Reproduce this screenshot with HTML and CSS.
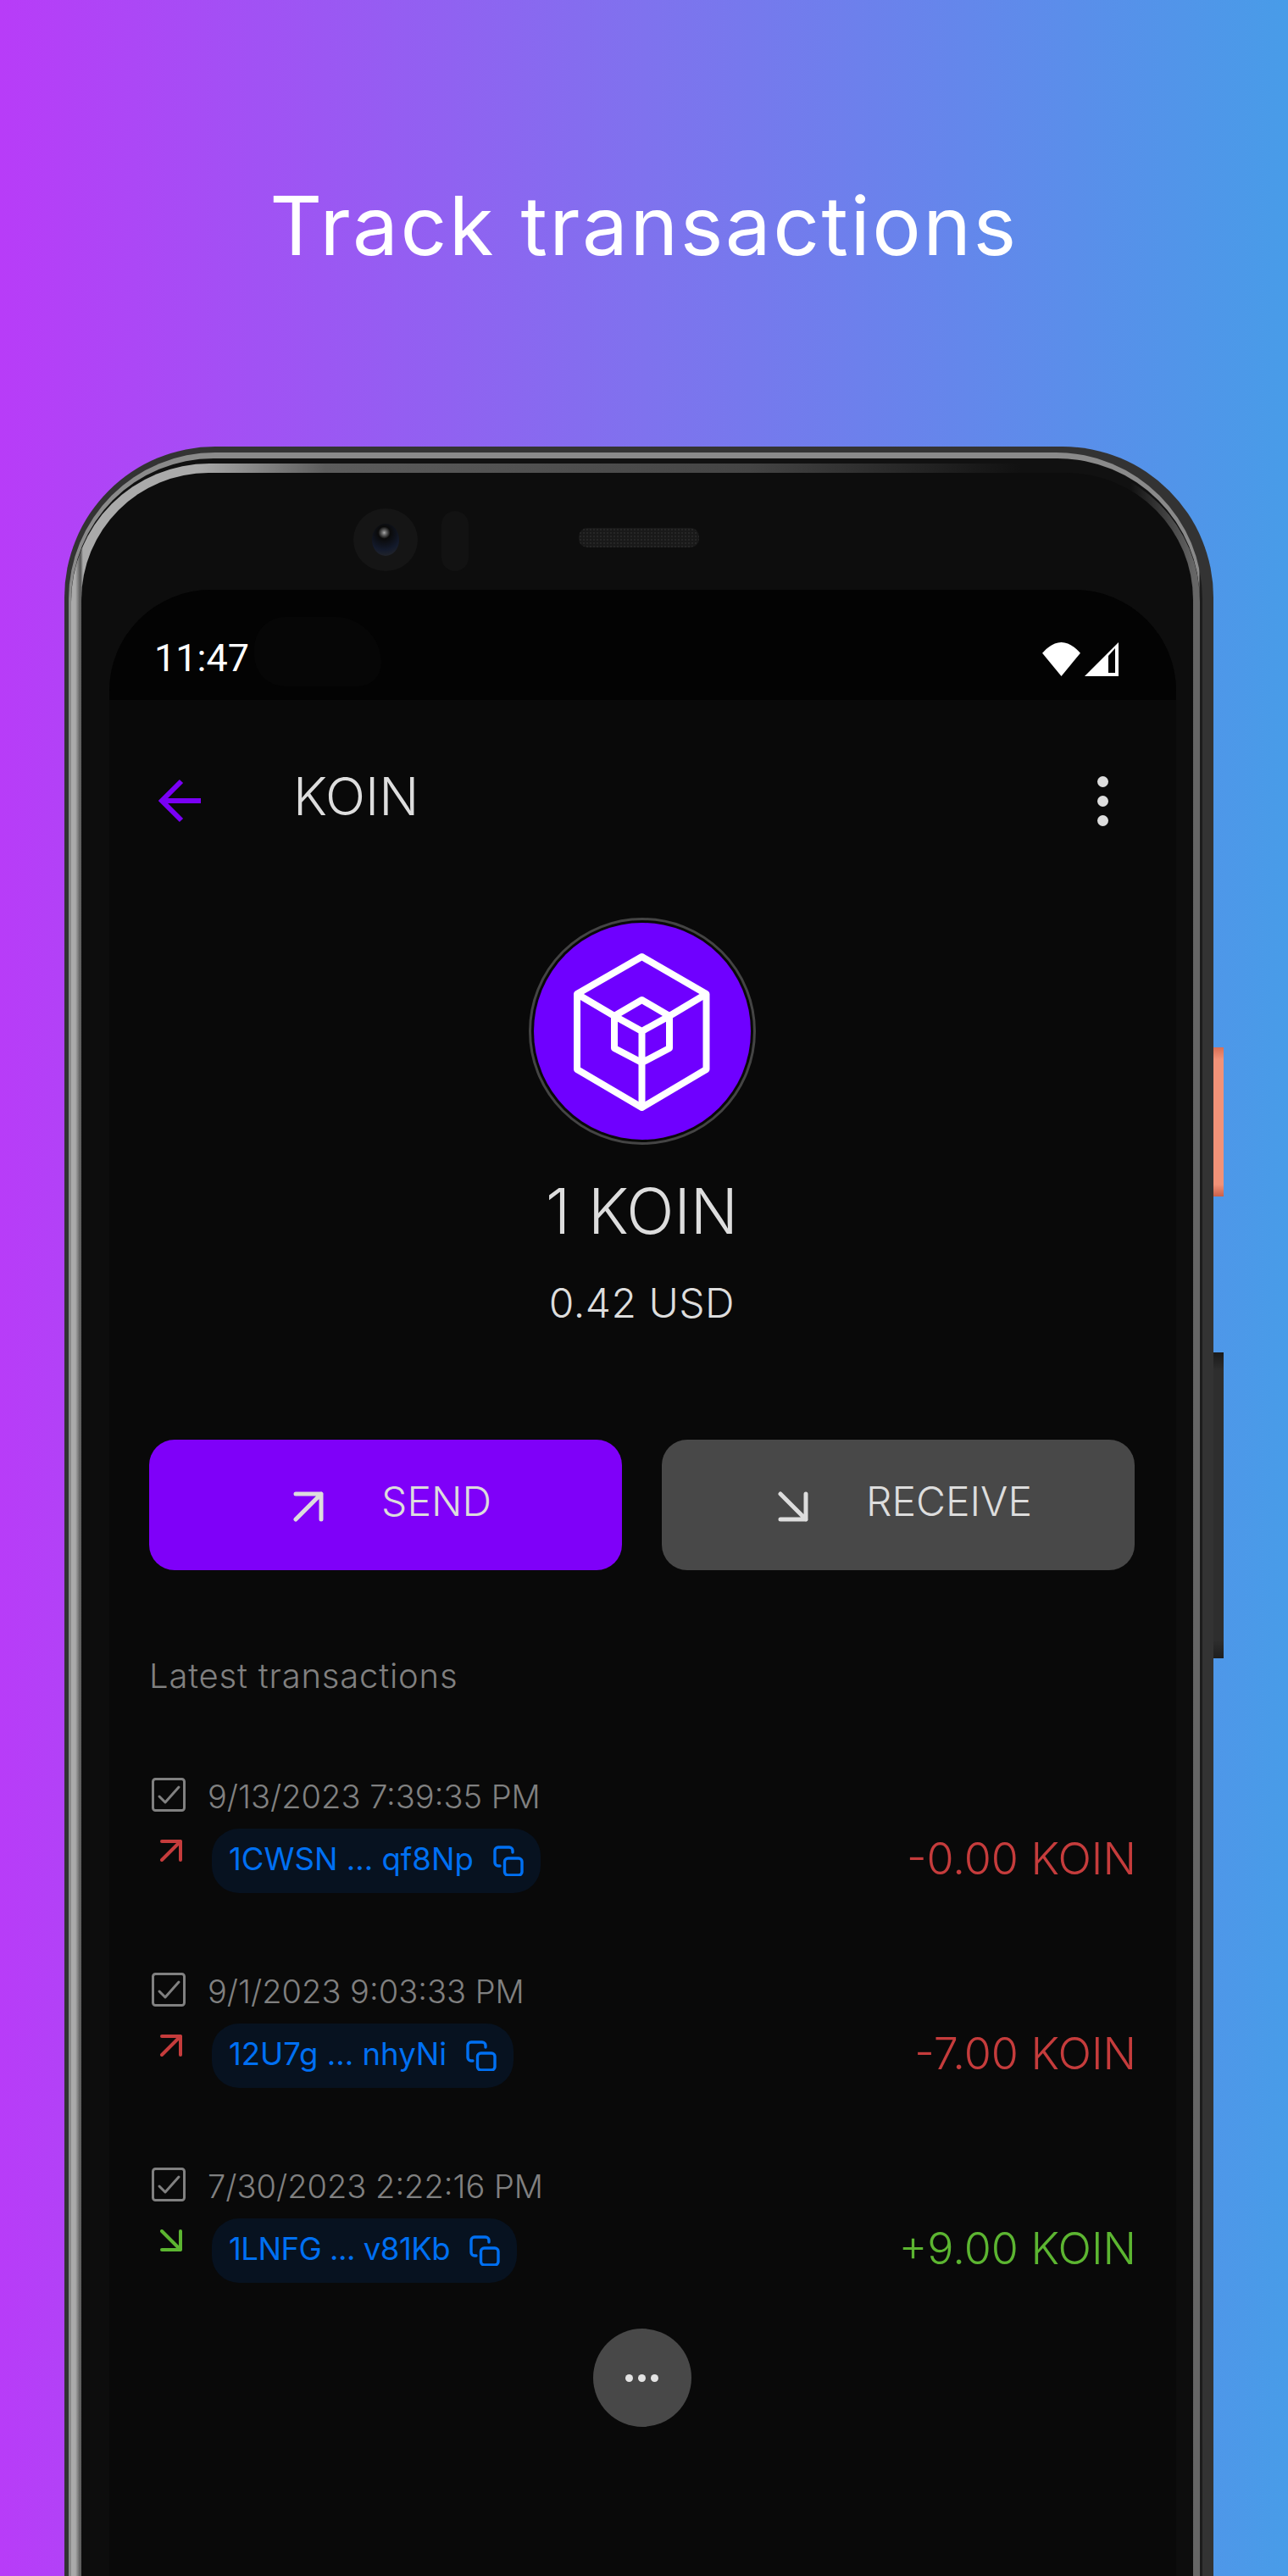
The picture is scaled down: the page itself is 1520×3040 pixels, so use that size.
FILE: index.html
```html
<!DOCTYPE html>
<html>
<head>
    <title>Track transactions</title>
    <link rel="stylesheet" href="styles.css">
</head>
<body>
    <h1 class="headline">Track transactions</h1>

    <div class="phone">
        <div class="side-key side-key-power"></div>
        <div class="side-key side-key-volume"></div>

        <div class="rim-outer">
            <div class="rim-gap">
                <div class="rim-inner">
                    <div class="bezel">
                        <!-- Camera and speaker -->
                        <div class="sensors">
                            <div class="camera">
                                <div class="lens"></div>
                            </div>
                            <div class="ir-sensor"></div>
                            <div class="speaker"></div>
                        </div>

                        <div class="screen">
                            <div class="status-bar">
                                <span class="clock">11:47</span>
                                <div class="punch-hole"></div>
                                <div class="status-icons">
                                    <svg class="wifi-icon" viewBox="0 0 48 41">
                                        <path d="M24 41 L1 13 Q24 -13 47 13 Z" fill="#fff"/>
                                    </svg>
                                    <svg class="signal-icon" viewBox="0 0 40 40">
                                        <path d="M40 0 V40 H0 Z" fill="#fff"/>
                                        <path d="M28 16 L36 7 V36 H28 Z" fill="#030303"/>
                                    </svg>
                                </div>
                            </div>

                            <div class="app-bar">
                                <svg class="back-icon" viewBox="0 0 50 52">
                                    <path d="M27 3 L4 26 L27 49 M4 26 H50" fill="none" stroke="#7a00f5" stroke-width="6"/>
                                </svg>
                                <span class="app-title">KOIN</span>
                                <div class="menu-dots">
                                    <i></i><i></i><i></i>
                                </div>
                            </div>

                            <div class="coin">
                                <div class="coin-logo">
                                    <svg viewBox="0 0 256 256">
                                        <g fill="none" stroke="#fff" stroke-width="8" stroke-linejoin="round">
                                            <path d="M127.5 40 L203.5 84 V173 L127.5 218 L51 173 V84 Z"/>
                                            <path d="M51 84 L95 110 M203.5 84 L160 110"/>
                                            <path d="M127.5 91 L160 110 V148 L127.5 165 L95 148 V110 Z"/>
                                            <path d="M95 110 L127.5 128 L160 110 M127.5 128 V218"/>
                                        </g>
                                    </svg>
                                </div>
                                <div class="coin-amount">1 KOIN</div>
                                <div class="coin-value">0.42 USD</div>
                            </div>

                            <div class="actions">
                                <button class="action action-send">
                                    <svg class="action-icon" viewBox="0 0 36 36">
                                        <path d="M3 3 H33 V33 M33 3 L3 33" fill="none" stroke="#ddd" stroke-width="5" stroke-linecap="round" stroke-linejoin="round"/>
                                    </svg>
                                    SEND
                                </button>
                                <button class="action action-receive">
                                    <svg class="action-icon" viewBox="0 0 36 36">
                                        <path d="M3 33 H33 V3 M33 33 L3 3" fill="none" stroke="#ddd" stroke-width="5" stroke-linecap="round" stroke-linejoin="round"/>
                                    </svg>
                                    RECEIVE
                                </button>
                            </div>

                            <div class="list-label">Latest transactions</div>

                            <!-- Transactions -->
                            <div class="tx-list">
                                <div class="tx">
                                    <div class="tx-main">
                                        <div class="tx-date">
                                            <svg class="check-icon" viewBox="0 0 40 40">
                                                <rect x="1.5" y="1.5" width="37" height="37" rx="3" fill="none" stroke="#808080" stroke-width="3"/>
                                                <path d="M9 22 L16 29 L32 11" fill="none" stroke="#808080" stroke-width="3" stroke-linecap="round" stroke-linejoin="round"/>
                                            </svg>
                                            <span>9/13/2023 7:39:35 PM</span>
                                        </div>
                                        <div class="tx-addr">
                                            <svg class="tx-arrow" viewBox="0 0 26 26">
                                                <path d="M2 2 H24 V24 M24 2 L2 24" fill="none" stroke="#c53c3c" stroke-width="4" stroke-linecap="round" stroke-linejoin="round"/>
                                            </svg>
                                            <div class="addr-pill">
                                                1CWSN ... qf8Np
                                                <svg class="copy-icon" viewBox="0 0 36 36">
                                                    <rect x="13.5" y="15" width="20.5" height="20" rx="4" fill="none" stroke="#0070f3" stroke-width="3.4"/>
                                                    <path d="M8 24 H6 a4 4 0 0 1 -4 -4 V6 a4 4 0 0 1 4 -4 h13 a4 4 0 0 1 4 4 v2" fill="none" stroke="#0070f3" stroke-width="3.4" stroke-linecap="round"/>
                                                </svg>
                                            </div>
                                        </div>
                                    </div>
                                    <div class="tx-amount tx-out">-0.00 KOIN</div>
                                </div>

                                <div class="tx">
                                    <div class="tx-main">
                                        <div class="tx-date">
                                            <svg class="check-icon" viewBox="0 0 40 40">
                                                <rect x="1.5" y="1.5" width="37" height="37" rx="3" fill="none" stroke="#808080" stroke-width="3"/>
                                                <path d="M9 22 L16 29 L32 11" fill="none" stroke="#808080" stroke-width="3" stroke-linecap="round" stroke-linejoin="round"/>
                                            </svg>
                                            <span>9/1/2023 9:03:33 PM</span>
                                        </div>
                                        <div class="tx-addr">
                                            <svg class="tx-arrow" viewBox="0 0 26 26">
                                                <path d="M2 2 H24 V24 M24 2 L2 24" fill="none" stroke="#c53c3c" stroke-width="4" stroke-linecap="round" stroke-linejoin="round"/>
                                            </svg>
                                            <div class="addr-pill">
                                                12U7g ... nhyNi
                                                <svg class="copy-icon" viewBox="0 0 36 36">
                                                    <rect x="13.5" y="15" width="20.5" height="20" rx="4" fill="none" stroke="#0070f3" stroke-width="3.4"/>
                                                    <path d="M8 24 H6 a4 4 0 0 1 -4 -4 V6 a4 4 0 0 1 4 -4 h13 a4 4 0 0 1 4 4 v2" fill="none" stroke="#0070f3" stroke-width="3.4" stroke-linecap="round"/>
                                                </svg>
                                            </div>
                                        </div>
                                    </div>
                                    <div class="tx-amount tx-out">-7.00 KOIN</div>
                                </div>

                                <div class="tx">
                                    <div class="tx-main">
                                        <div class="tx-date">
                                            <svg class="check-icon" viewBox="0 0 40 40">
                                                <rect x="1.5" y="1.5" width="37" height="37" rx="3" fill="none" stroke="#808080" stroke-width="3"/>
                                                <path d="M9 22 L16 29 L32 11" fill="none" stroke="#808080" stroke-width="3" stroke-linecap="round" stroke-linejoin="round"/>
                                            </svg>
                                            <span>7/30/2023 2:22:16 PM</span>
                                        </div>
                                        <div class="tx-addr">
                                            <svg class="tx-arrow" viewBox="0 0 26 26">
                                                <path d="M2 2 L24 24 V2 M24 24 H2" fill="none" stroke="#5cb531" stroke-width="4" stroke-linecap="round" stroke-linejoin="round"/>
                                            </svg>
                                            <div class="addr-pill addr-tight">
                                                1LNFG ... v81Kb
                                                <svg class="copy-icon" viewBox="0 0 36 36">
                                                    <rect x="13.5" y="15" width="20.5" height="20" rx="4" fill="none" stroke="#0070f3" stroke-width="3.4"/>
                                                    <path d="M8 24 H6 a4 4 0 0 1 -4 -4 V6 a4 4 0 0 1 4 -4 h13 a4 4 0 0 1 4 4 v2" fill="none" stroke="#0070f3" stroke-width="3.4" stroke-linecap="round"/>
                                                </svg>
                                            </div>
                                        </div>
                                    </div>
                                    <div class="tx-amount tx-in">+9.00 KOIN</div>
                                </div>
                            </div>

                            <button class="more-btn"><i></i><i></i><i></i></button>
                        </div>
                    </div>
                </div>
            </div>
        </div>
    </div>
</body>
</html>
```

FILE: styles.css
```css
html, body {
    margin: 0;
    height: 3040px;
    overflow: hidden;
}
body {
    background: linear-gradient(90deg, #b83cf8 0%, #7f72ee 50%, #489ce8 100%);
    font-family: "Inter", "Noto Sans", sans-serif;
}

.headline {
    margin: 0;
    height: 527px;
    box-sizing: border-box;
    padding-top: 206px;
    line-height: 120px;
    font-size: 96px;
    font-weight: 400;
    letter-spacing: 2.5px;
    color: #fff;
    text-align: center;
}

/* Phone body, each layer is one stripe of the metal edge */
.phone {
    position: relative;
    box-sizing: border-box;
    width: 1356px;
    height: 2513px;
    margin-left: 76px;
    padding: 7px 13px 0 5px;
    background: #333;
    border-radius: 178px 178px 0 0;
}
.side-key {
    position: absolute;
    left: 100%;
    width: 12px;
}
.side-key-power {
    top: 709px;
    height: 176px;
    background: linear-gradient(180deg, #d86f55 0, #f19278 8%, #f19278 92%, #c9604a 100%);
}
.side-key-volume {
    top: 1069px;
    height: 361px;
    background: linear-gradient(180deg, #1a1a1a 0, #2e2e2e 6%, #2e2e2e 94%, #1e1e1e 100%);
}
.rim-outer {
    box-sizing: border-box;
    height: 100%;
    padding: 7px 3px 0 3px;
    background: linear-gradient(270deg, #1c1c1c 0, #1c1c1c 3px, #8a8a8a 4px, #8a8a8a 100%);
    border-radius: 173px 173px 0 0;
}
.rim-gap {
    box-sizing: border-box;
    height: 100%;
    padding-top: 6px;
    background: #111;
    border-radius: 168px 168px 0 0;
}
.rim-inner {
    box-sizing: border-box;
    height: 100%;
    padding: 11px 8px 0 12px;
    background: linear-gradient(90deg, #aaa 0, #aaa 5px, #555 11px, #aaa 14px, #aaa 150px, #5c5c5c 300px, #444 800px, #111 1120px, #111 1250px, #666 1325px);
    border-radius: 163px 163px 0 0;
}
.bezel {
    box-sizing: border-box;
    height: 100%;
    background: #0d0d0d;
    border-radius: 150px 150px 0 0;
}

.sensors {
    display: flex;
    align-items: flex-start;
    box-sizing: border-box;
    height: 138px;
    padding-left: 321px;
}
.camera {
    display: flex;
    align-items: center;
    justify-content: center;
    width: 76px;
    height: 74px;
    margin-top: 42px;
    background: #151515;
    border-radius: 50%;
}
.lens {
    width: 32px;
    height: 38px;
    background: radial-gradient(circle at 45% 28%, #aaa 0, #666 8%, #0a0a0a 22%, #131a2c 62%, #2a2a2a 100%);
    border-radius: 50%;
}
.ir-sensor {
    width: 32px;
    height: 71px;
    margin: 45px 0 0 28px;
    background: #121212;
    border-radius: 16px;
}
.speaker {
    width: 142px;
    height: 23px;
    margin: 65px 0 0 130px;
    background: #191919 radial-gradient(#262626 1px, transparent 1px) 0 0 / 4px 4px;
    border-radius: 10px;
}

.screen {
    box-sizing: border-box;
    display: flex;
    flex-direction: column;
    height: 2400px;
    margin: 0 20px 0 33px;
    background: #090909;
    border-radius: 120px 120px 0 0;
    overflow: hidden;
}

.status-bar {
    position: relative;
    display: flex;
    flex: none;
    align-items: center;
    justify-content: space-between;
    box-sizing: border-box;
    height: 130px;
    padding: 34px 68px 0 53px;
    background: #030303;
}
.clock {
    margin-bottom: 4px;
    font-family: "Roboto", sans-serif;
    font-size: 45px;
    color: #fff;
}
.punch-hole {
    position: absolute;
    left: 171px;
    top: 32px;
    width: 150px;
    height: 82px;
    background: #060606;
    border-radius: 40px 60px 30px 40px;
}
.status-icons {
    display: flex;
    align-items: flex-end;
    gap: 4px;
}
.wifi-icon {
    width: 47px;
    height: 40px;
}
.signal-icon {
    width: 40px;
    height: 40px;
}

.app-bar {
    display: flex;
    flex: none;
    align-items: center;
    box-sizing: border-box;
    height: 238px;
    padding: 0 80px 0 58px;
}
.back-icon {
    width: 50px;
    height: 52px;
}
.app-title {
    flex: 1;
    margin: 0 0 12px 109px;
    font-size: 62px;
    font-weight: 350;
    color: #ddd;
}
.menu-dots {
    display: flex;
    flex-direction: column;
    gap: 10px;
}
.menu-dots i {
    display: block;
    width: 13px;
    height: 13px;
    background: #ddd;
    border-radius: 50%;
}

.coin {
    display: flex;
    flex: none;
    flex-direction: column;
    align-items: center;
    margin: 19px 2px 0 0;
}
.coin-logo {
    box-sizing: border-box;
    width: 268px;
    height: 268px;
    padding: 3px;
    border: 3px solid #444;
    background: #6f00ff;
    background-clip: content-box;
    border-radius: 50%;
}
.coin-logo svg {
    display: block;
    width: 256px;
    height: 256px;
}
.coin-amount {
    margin-top: 28px;
    line-height: 100px;
    font-size: 74px;
    font-weight: 350;
    color: #ddd;
}
.coin-value {
    margin-top: 29px;
    line-height: 60px;
    font-size: 48px;
    font-weight: 350;
    letter-spacing: 0.5px;
    color: #ddd;
}

.actions {
    display: grid;
    flex: none;
    grid-template-columns: 558px 558px;
    gap: 47px;
    margin: 131px 0 0 47px;
}
.action {
    display: flex;
    align-items: center;
    justify-content: center;
    gap: 68px;
    height: 154px;
    padding: 0 0 10px 16px;
    border: none;
    border-radius: 30px;
    font-family: inherit;
    font-size: 48px;
    font-weight: 350;
    color: #ddd;
}
.action-send {
    background: #7f00f9;
}
.action-receive {
    background: #484848;
}
.action-icon {
    width: 36px;
    height: 36px;
    margin-top: 14px;
}

.list-label {
    flex: none;
    margin: 95px 0 0 47px;
    line-height: 60px;
    font-size: 40px;
    font-weight: 350;
    letter-spacing: 0.8px;
    color: #808080;
}

.tx-list {
    display: flex;
    flex: none;
    flex-direction: column;
    gap: 94px;
    margin: 90px 47px 0 50px;
}
.tx {
    display: flex;
    align-items: center;
    justify-content: space-between;
    height: 136px;
}
.tx-amount {
    margin-top: 54px;
    font-size: 52px;
    font-weight: 350;
}
.tx-out {
    color: #c53c3c;
}
.tx-in {
    color: #5cb531;
}
.tx-date {
    display: flex;
    align-items: center;
    gap: 26px;
    height: 40px;
    font-size: 38px;
    font-weight: 350;
    color: #808080;
}
.tx-date span {
    margin-top: 4px;
}
.check-icon {
    flex: none;
    width: 40px;
    height: 40px;
}
.tx-addr {
    display: flex;
    align-items: flex-start;
    margin-top: 20px;
}
.tx-arrow {
    width: 26px;
    height: 26px;
    margin: 13px 35px 0 10px;
}
.addr-pill {
    display: flex;
    align-items: center;
    gap: 23px;
    box-sizing: border-box;
    height: 76px;
    padding: 0 20px 4px;
    background: #071220;
    border-radius: 32px;
    font-size: 36.5px;
    font-weight: 400;
    color: #0070f3;
}
.addr-tight {
    letter-spacing: -0.5px;
}
.copy-icon {
    width: 36px;
    height: 36px;
    margin-top: 4px;
}

.more-btn {
    display: flex;
    flex: none;
    align-items: center;
    justify-content: center;
    gap: 6px;
    align-self: center;
    width: 116px;
    height: 116px;
    margin: 54px 2px 0 0;
    padding: 0;
    border: none;
    background: #484848;
    border-radius: 50%;
}
.more-btn i {
    display: block;
    width: 9px;
    height: 9px;
    background: #e4e4e4;
    border-radius: 50%;
}
```
